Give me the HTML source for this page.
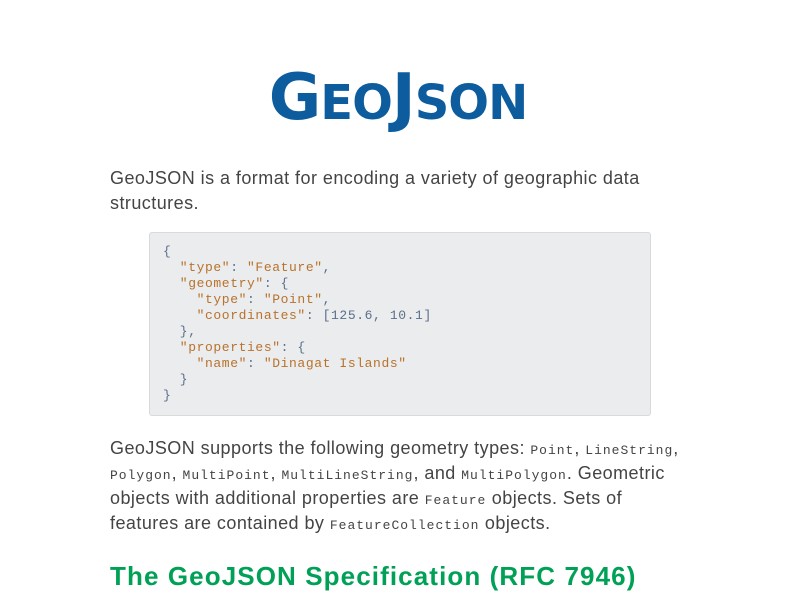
<!DOCTYPE html>
<html><head><meta charset="utf-8"><style>
html,body{margin:0;padding:0;background:#fff;width:800px;height:600px;overflow:hidden}
body{font-family:"Liberation Sans","DejaVu Sans",sans-serif;color:#444;}
.logo{position:absolute;left:266px;top:66px;width:264px;text-align:center;color:#0d5c9e;font-family:"DejaVu Sans","Liberation Sans",sans-serif;font-weight:bold;white-space:nowrap;line-height:1;letter-spacing:-1px}
.logo .b{font-size:64px}
.logo .s{font-size:48px}
p{position:absolute;left:110px;margin:0;font-size:18px;line-height:25px;letter-spacing:0.45px;white-space:nowrap}
code{font-family:"Liberation Mono",monospace;font-size:13px;letter-spacing:1px;line-height:10px;display:inline-block;vertical-align:baseline}
pre{position:absolute;left:149px;top:232px;width:502px;height:184px;margin:0;background:#ebeced;border:1px solid #d8d9da;border-radius:3px;box-sizing:border-box;padding:11px 13px;font-family:"Liberation Mono",monospace;font-size:13px;letter-spacing:0.6px;line-height:16px;color:#b8722c}
pre .p{color:#5a6f8a}
h2{position:absolute;left:110px;top:561px;margin:0;font-size:26px;color:#00a156;font-weight:bold;white-space:nowrap;letter-spacing:1.1px}
</style></head><body>
<div class="logo"><span class="b">G</span><span class="s">EO</span><span class="b">J</span><span class="s">SON</span></div>
<p style="top:166px">GeoJSON is a format for encoding a variety of geographic data<br>structures.</p>
<pre><span class="p">{</span>
  "type"<span class="p">:</span> "Feature"<span class="p">,</span>
  "geometry"<span class="p">: {</span>
    "type"<span class="p">:</span> "Point"<span class="p">,</span>
    "coordinates"<span class="p">: [125.6, 10.1]</span>
<span class="p">  },</span>
  "properties"<span class="p">: {</span>
    "name"<span class="p">:</span> "Dinagat Islands"
<span class="p">  }</span>
<span class="p">}</span></pre>
<p style="top:436px">GeoJSON supports the following geometry types: <code>Point</code>, <code>LineString</code>,<br><code>Polygon</code>, <code>MultiPoint</code>, <code>MultiLineString</code>, and <code>MultiPolygon</code>. Geometric<br>objects with additional properties are <code>Feature</code> objects. Sets of<br>features are contained by <code>FeatureCollection</code> objects.</p>
<h2>The GeoJSON Specification (RFC 7946)</h2>
</body></html>
